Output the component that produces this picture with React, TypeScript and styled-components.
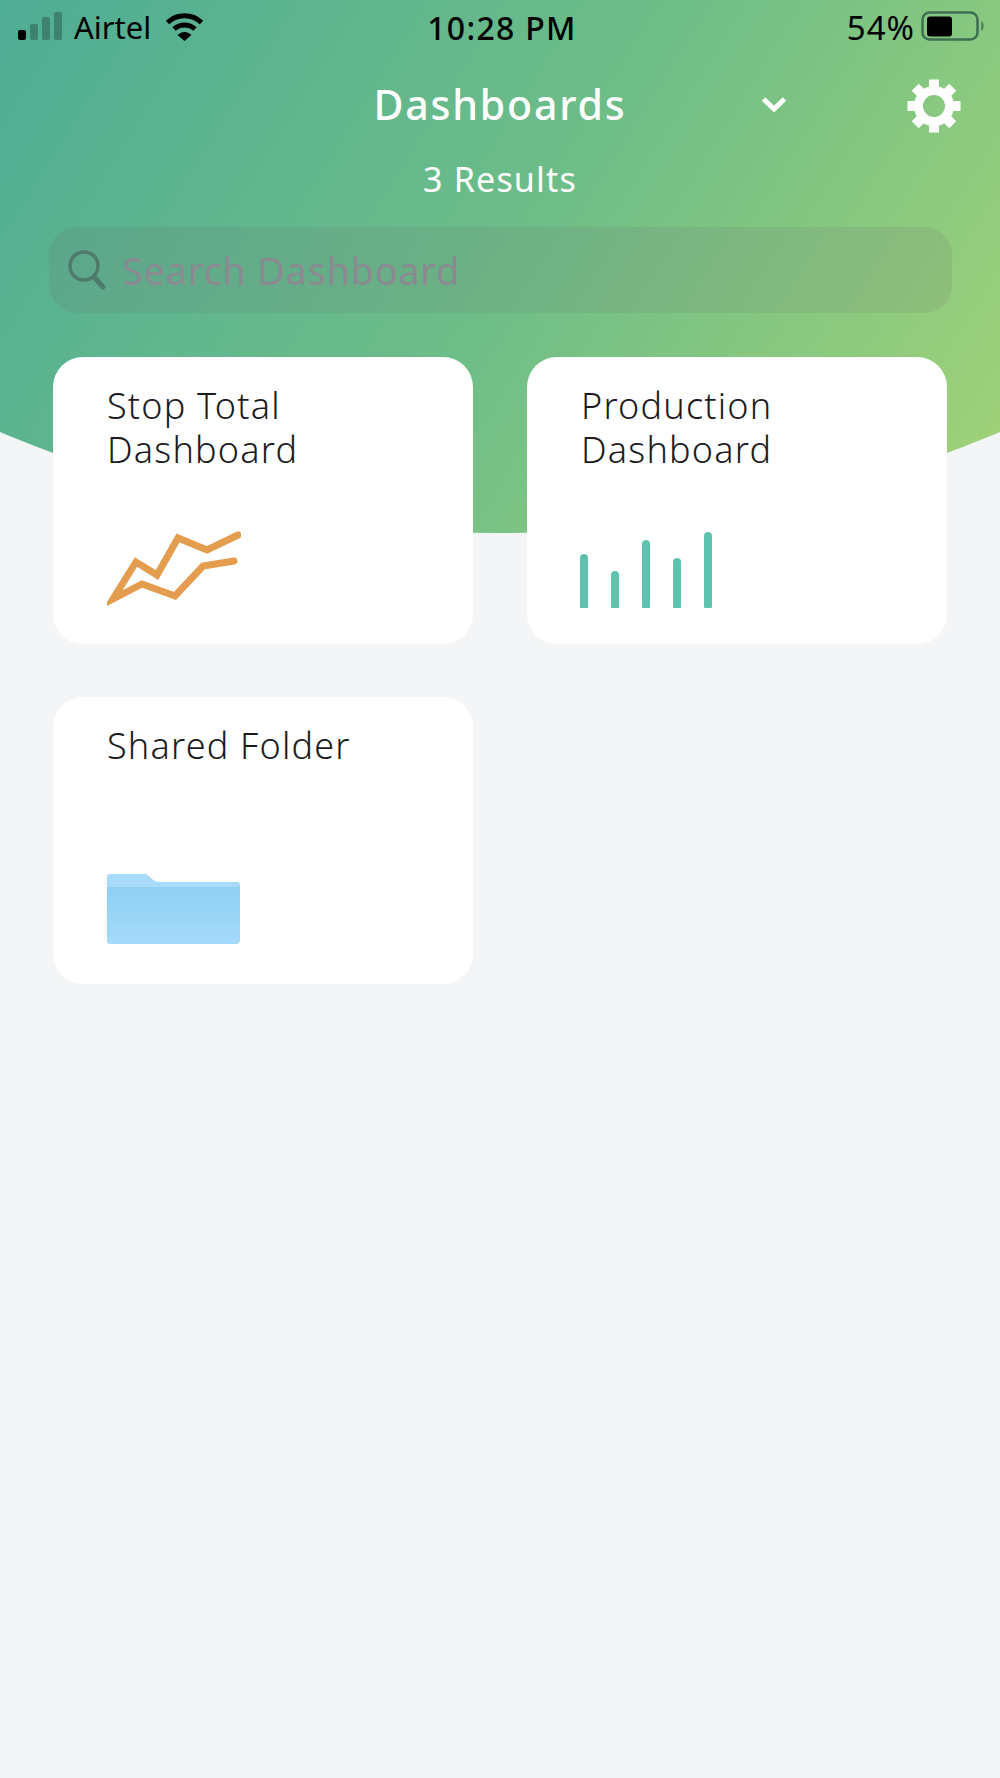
import React from 'react';
import styled, { createGlobalStyle } from 'styled-components';

const GlobalStyle = createGlobalStyle`
    html, body {
        margin: 0;
        padding: 0;
        background: #f4f5f7;
    }
    * {
        box-sizing: border-box;
    }
`;

const FONT = `'Noto Sans', 'Open Sans', sans-serif`;

const barHeights = [54, 37, 68, 50, 76];

const dashboards = [
    { id: 'stop', title: ['Stop Total', 'Dashboard'], icon: 'line' },
    { id: 'production', title: ['Production', 'Dashboard'], icon: 'bars' },
    { id: 'shared', title: ['Shared Folder'], icon: 'folder' },
];

function SignalIcon() {
    return (<svg width="46" height="30" viewBox="0 0 46 30">
        <rect x="0" y="18" width="8" height="10" rx="2" fill="#000" />
        <rect x="12" y="12" width="8" height="16" rx="2" fill="#000" opacity="0.25" />
        <rect x="24" y="5" width="8" height="23" rx="2" fill="#000" opacity="0.25" />
        <rect x="36" y="0" width="8" height="28" rx="2" fill="#000" opacity="0.25" />
    </svg>);
}

function WifiIcon() {
    return (<svg width="40" height="30" viewBox="0 0 40 30">
        <path d="M2.5 10.5 C12 1.5 27 1.5 36.5 10.5" fill="none" stroke="#000" strokeWidth="5" />
        <path d="M9 17 C15 11.5 24 11.5 30 17" fill="none" stroke="#000" strokeWidth="5" />
        <path d="M12.5 23 C17 19 22 19 26.5 23 L19.5 29 Z" fill="#000" />
    </svg>);
}

function BatteryIcon() {
    return (<svg width="65" height="32" viewBox="0 0 65 32">
        <rect x="1.5" y="1.5" width="55" height="27" rx="7" fill="none" stroke="#3f6f52" strokeWidth="2.5" />
        <rect x="6" y="5.5" width="25" height="20" rx="3" fill="#000" />
        <path d="M60.5 10 C63 11 63 19 60.5 20 Z" fill="#3f6f52" />
    </svg>);
}

function GearIcon() {
    return (<svg width="54" height="54" viewBox="0 0 54 54">
        {[0, 45, 90, 135, 180, 225, 270, 315].map(angle => (
            <rect key={angle} x="22" y="0.5" width="10" height="12" fill="#fff" transform={`rotate(${angle} 27 27)`} />
        ))}
        <circle cx="27" cy="27" r="15.5" fill="none" stroke="#fff" strokeWidth="9" />
    </svg>);
}

function LineChartIcon() {
    return (<svg width="134" height="78" viewBox="0 0 134 78">
        <path
            d="M131 5 L100 20 L71 8 L50 45 L29 32 L6 69 L35 54 L68 66 L96 36 L127 31"
            fill="none"
            stroke="#e49c4e"
            strokeWidth="7"
            strokeLinecap="round"
            strokeLinejoin="miter"
            strokeMiterlimit="20"
        />
    </svg>);
}

function FolderIcon() {
    return (<svg width="134" height="70" viewBox="0 0 134 70">
        <defs>
            <linearGradient id="folderFront" x1="0" y1="0" x2="0" y2="1">
                <stop offset="0" stopColor="#8fcff3" />
                <stop offset="1" stopColor="#a4daf9" />
            </linearGradient>
        </defs>
        <path
            d="M0 3 Q0 0 3 0 H39 C44 3 46 8 53 8 H130 Q133 8 133 11 V30 H0 Z"
            fill="#a8dbfa"
        />
        <path
            d="M0 13 H133 V66 Q133 70 129 70 H3 Q0 70 0 67 Z"
            fill="url(#folderFront)"
        />
    </svg>);
}

export default function App() {
    return (<Page>
        <GlobalStyle />
        <StatusBar>
            <StatusLeft>
                <SignalIcon />
                <Carrier>Airtel</Carrier>
                <WifiIcon />
            </StatusLeft>
            <Clock>10:28 PM</Clock>
            <StatusRight>
                <BatteryText>54%</BatteryText>
                <BatteryIcon />
            </StatusRight>
        </StatusBar>

        <TitleRow>
            <span />
            <Title>Dashboards</Title>
            <TitleActions>
                <Chevron width="26" height="16" viewBox="0 0 26 16">
                    <path d="M2.5 3 L13 13 L23.5 3" fill="none" stroke="#fff" strokeWidth="5" />
                </Chevron>
                <GearIcon />
            </TitleActions>
        </TitleRow>
        <Results>3 Results</Results>

        <SearchBar>
            <svg width="40" height="42" viewBox="0 0 40 42">
                <circle cx="17" cy="17" r="14" fill="none" stroke="#4e7a6c" strokeWidth="3.5" />
                <path d="M27 28 L36 38" fill="none" stroke="#4e7a6c" strokeWidth="5" strokeLinecap="round" />
            </svg>
            <SearchInput placeholder="Search Dashboard" readOnly />
        </SearchBar>

        <CardGrid>
            {dashboards.map(item => (
                <Card key={item.id}>
                    <CardTitle>
                        {item.title.map(line => <div key={line}>{line}</div>)}
                    </CardTitle>
                    {item.icon === 'line' && <LineChartIcon />}
                    {item.icon === 'bars' && (
                        <Bars>
                            {barHeights.map((height, i) => <Bar key={i} style={{ height }} />)}
                        </Bars>
                    )}
                    {item.icon === 'folder' && <FolderHolder><FolderIcon /></FolderHolder>}
                </Card>
            ))}
        </CardGrid>
    </Page>);
}

const Page = styled.div`
    position: relative;
    width: 1000px;
    height: 1778px;
    overflow: hidden;
    background: #f4f5f7;
    font-family: ${FONT};

    &::before {
        content: '';
        position: absolute;
        top: 0;
        left: 0;
        width: 100%;
        height: 533px;
        background: linear-gradient(122deg, #4fad95 0%, #6dbd88 50%, #a3d377 100%);
        clip-path: circle(1288px at 500px -755px);
    }
`;

const StatusBar = styled.div`
    position: relative;
    display: grid;
    grid-template-columns: 1fr auto 1fr;
    align-items: center;
    height: 54px;
    padding: 0 14px 0 18px;
    color: #000;
`;

const StatusLeft = styled.div`
    display: flex;
    align-items: center;
    gap: 10px;
`;

const Carrier = styled.span`
    font-size: 31px;
    margin-right: 4px;
`;

const Clock = styled.span`
    font-size: 32px;
    font-weight: 500;
    letter-spacing: 1.3px;
`;

const StatusRight = styled.div`
    display: flex;
    align-items: center;
    justify-content: flex-end;
    gap: 6px;
`;

const BatteryText = styled.span`
    font-size: 33px;
    letter-spacing: 1px;
`;

const TitleRow = styled.div`
    position: relative;
    display: grid;
    grid-template-columns: 1fr auto 1fr;
    align-items: center;
    height: 106px;
    margin-top: -1px;
`;

const Title = styled.h1`
    margin: 0 0 4px;
    color: #fff;
    font-size: 41px;
    font-weight: 500;
    letter-spacing: 1.8px;
`;

const TitleActions = styled.div`
    display: flex;
    align-items: center;
    padding-left: 135px;
    gap: 120px;
`;

const Chevron = styled.svg`
    flex: none;
    margin-bottom: 4px;
`;

const Results = styled.div`
    position: relative;
    margin-top: -3px;
    color: #fff;
    font-size: 34px;
    letter-spacing: 1.2px;
    line-height: 46px;
    text-align: center;
`;

const SearchBar = styled.div`
    position: relative;
    display: flex;
    align-items: center;
    gap: 15px;
    height: 86px;
    margin: 25px 48px 0 49px;
    padding: 0 0 0 18px;
    border-radius: 28px;
    background: rgba(110, 105, 115, 0.14);
`;

const SearchInput = styled.input`
    flex: 1;
    min-width: 0;
    padding: 0;
    border: none;
    outline: none;
    background: transparent;
    font-family: ${FONT};
    font-size: 38px;
    letter-spacing: 0.7px;

    &::placeholder {
        color: #8b8a92;
        opacity: 1;
    }
`;

const CardGrid = styled.div`
    position: relative;
    display: grid;
    grid-template-columns: 420px 420px;
    grid-auto-rows: 287px;
    column-gap: 54px;
    row-gap: 53px;
    margin-top: 44px;
    padding: 0 53px;
`;

const Card = styled.div`
    display: flex;
    flex-direction: column;
    justify-content: space-between;
    align-items: flex-start;
    padding: 27px 0 36px 54px;
    border-radius: 30px;
    background: #fff;
`;

const CardTitle = styled.div`
    color: #1b1b1f;
    font-size: 36px;
    font-weight: 300;
    letter-spacing: 1.2px;
    line-height: 44px;
`;

const Bars = styled.div`
    display: flex;
    align-items: flex-end;
    gap: 23px;
    margin-left: -1px;
`;

const Bar = styled.div`
    width: 8px;
    border-radius: 4px 4px 1px 1px;
    background: #5ec3ae;
`;

const FolderHolder = styled.div`
    display: flex;
    margin-bottom: 4px;
`;
